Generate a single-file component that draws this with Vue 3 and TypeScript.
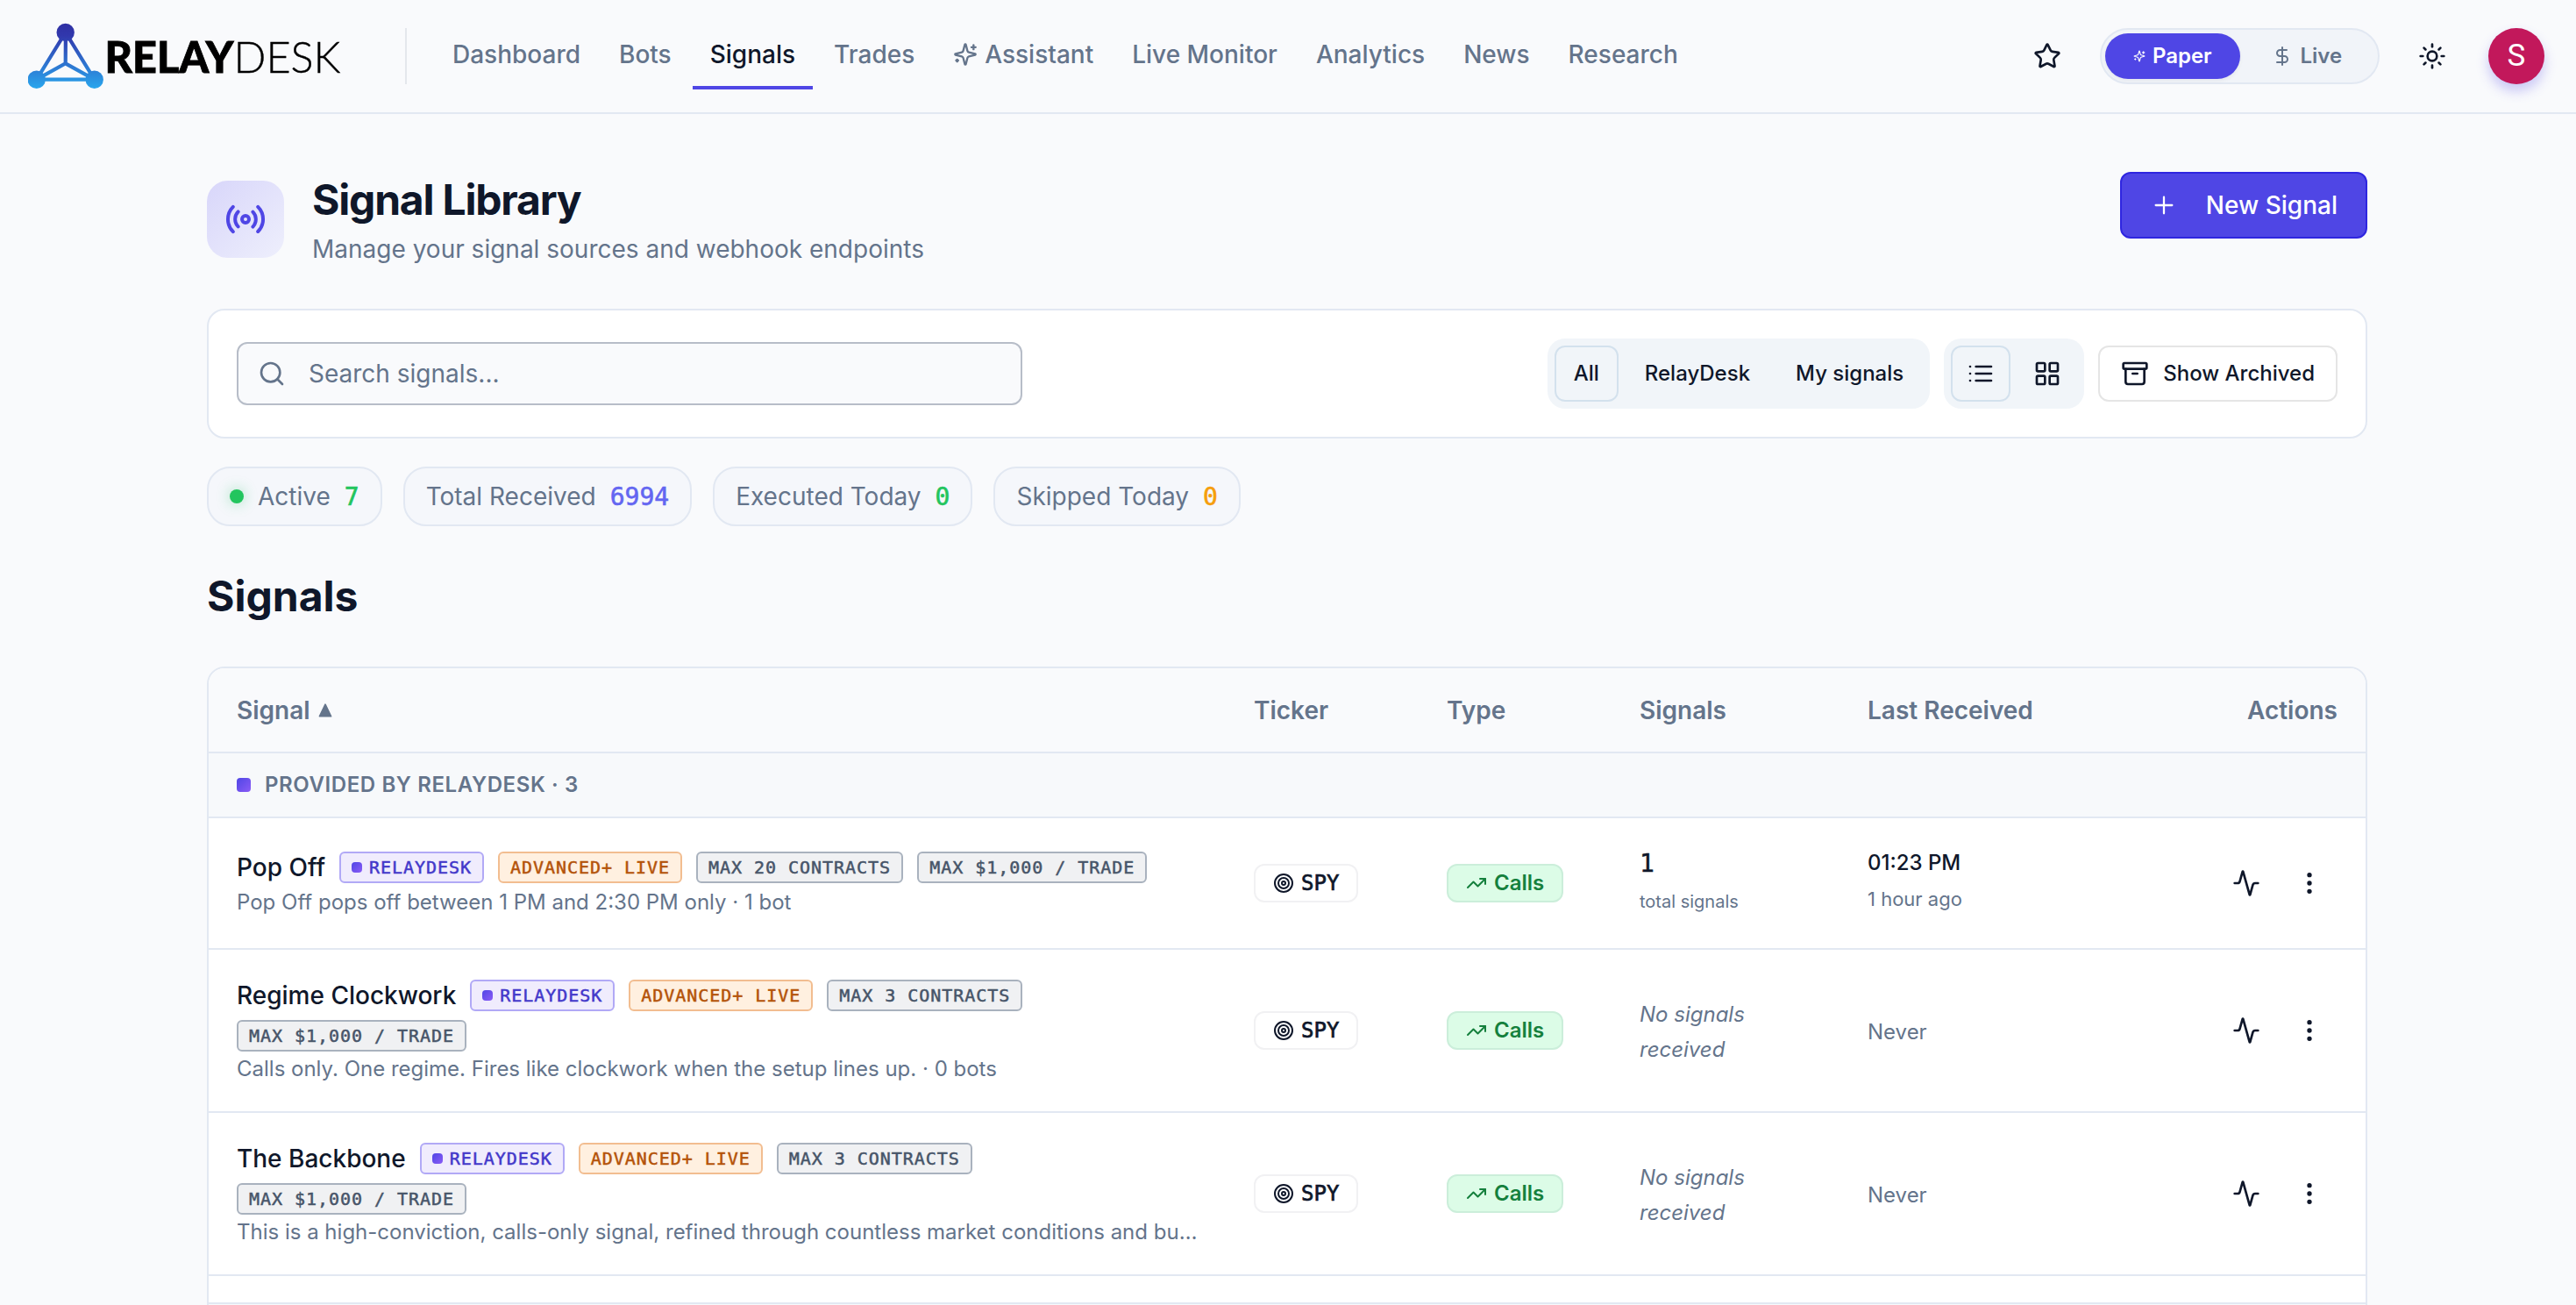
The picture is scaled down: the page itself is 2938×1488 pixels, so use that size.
<script setup lang="ts">
import { h, type FunctionalComponent } from 'vue'

const circle = (cx: number, cy: number, r: number) =>
  `M${cx - r} ${cy}a${r} ${r} 0 1 0 ${2 * r} 0a${r} ${r} 0 1 0 ${-2 * r} 0`

const icons: Record<string, string[]> = {
  sparkles: [
    'M9.937 15.5A2 2 0 0 0 8.5 14.063l-6.135-1.582a.5.5 0 0 1 0-.962L8.5 9.936A2 2 0 0 0 9.937 8.5l1.582-6.135a.5.5 0 0 1 .963 0L14.063 8.5A2 2 0 0 0 15.5 9.937l6.135 1.581a.5.5 0 0 1 0 .964L15.5 14.063a2 2 0 0 0-1.437 1.437l-1.582 6.135a.5.5 0 0 1-.963 0z',
    'M20 3v4', 'M22 5h-4', 'M4 17v2', 'M5 18H3',
  ],
  star: ['M11.525 2.295a.53.53 0 0 1 .95 0l2.31 4.679a2.123 2.123 0 0 0 1.595 1.16l5.166.756a.53.53 0 0 1 .294.904l-3.736 3.638a2.123 2.123 0 0 0-.611 1.878l.882 5.14a.53.53 0 0 1-.771.56l-4.618-2.428a2.122 2.122 0 0 0-1.973 0L6.396 21.01a.53.53 0 0 1-.77-.56l.881-5.139a2.122 2.122 0 0 0-.611-1.879L2.16 9.795a.53.53 0 0 1 .294-.906l5.165-.755a2.122 2.122 0 0 0 1.597-1.16z'],
  dollar: ['M12 2v20', 'M17 5H9.5a3.5 3.5 0 0 0 0 7h5a3.5 3.5 0 0 1 0 7H6'],
  sun: [circle(12, 12, 4), 'M12 2v2', 'M12 20v2', 'm4.93 4.93 1.41 1.41', 'm17.66 17.66 1.41 1.41', 'M2 12h2', 'M20 12h2', 'm6.34 17.66-1.41 1.41', 'm19.07 4.93-1.41 1.41'],
  radio: ['M4.9 19.1C1 15.2 1 8.8 4.9 4.9', 'M7.8 16.2c-2.3-2.3-2.3-6.1 0-8.5', circle(12, 12, 2), 'M16.2 7.8c2.3 2.3 2.3 6.1 0 8.5', 'M19.1 4.9C23 8.8 23 15.1 19.1 19'],
  plus: ['M5 12h14', 'M12 5v14'],
  search: [circle(11, 11, 8), 'm21 21-4.3-4.3'],
  list: ['M3 6h.01', 'M3 12h.01', 'M3 18h.01', 'M8 6h13', 'M8 12h13', 'M8 18h13'],
  grid: [
    'M4 3h5a1 1 0 0 1 1 1v5a1 1 0 0 1-1 1H4a1 1 0 0 1-1-1V4a1 1 0 0 1 1-1z',
    'M15 3h5a1 1 0 0 1 1 1v5a1 1 0 0 1-1 1h-5a1 1 0 0 1-1-1V4a1 1 0 0 1 1-1z',
    'M15 14h5a1 1 0 0 1 1 1v5a1 1 0 0 1-1 1h-5a1 1 0 0 1-1-1v-5a1 1 0 0 1 1-1z',
    'M4 14h5a1 1 0 0 1 1 1v5a1 1 0 0 1-1 1H4a1 1 0 0 1-1-1v-5a1 1 0 0 1 1-1z',
  ],
  archive: ['M3 3h18a1 1 0 0 1 1 1v3a1 1 0 0 1-1 1H3a1 1 0 0 1-1-1V4a1 1 0 0 1 1-1z', 'M4 8v11a2 2 0 0 0 2 2h12a2 2 0 0 0 2-2V8', 'M10 12h4'],
  target: [circle(12, 12, 10), circle(12, 12, 6), circle(12, 12, 2)],
  trend: ['M22 7 13.5 15.5 8.5 10.5 2 17', 'M16 7h6v6'],
  activity: ['M22 12h-2.48a2 2 0 0 0-1.93 1.46l-2.35 8.36a.25.25 0 0 1-.48 0L9.24 2.18a.25.25 0 0 0-.48 0l-2.35 8.36A2 2 0 0 1 4.49 12H2'],
  more: [circle(12, 5, 1), circle(12, 12, 1), circle(12, 19, 1)],
}

const Icon: FunctionalComponent<{ name: string; size: number; weight?: number }> = (props) =>
  h(
    'svg',
    {
      width: props.size,
      height: props.size,
      viewBox: '0 0 24 24',
      fill: 'none',
      stroke: 'currentColor',
      'stroke-width': props.weight ?? 2,
      'stroke-linecap': 'round',
      'stroke-linejoin': 'round',
      style: 'display:block;flex:none',
    },
    (icons[props.name] ?? []).map((d) => h('path', { d })),
  )
Icon.props = ['name', 'size', 'weight']

interface NavItem { label: string; icon?: string; active?: boolean }
const nav: NavItem[] = [
  { label: 'Dashboard' },
  { label: 'Bots' },
  { label: 'Signals', active: true },
  { label: 'Trades' },
  { label: 'Assistant', icon: 'sparkles' },
  { label: 'Live Monitor' },
  { label: 'Analytics' },
  { label: 'News' },
  { label: 'Research' },
]

const stats = [
  { label: 'Active', value: '7', tone: 'green', dot: true },
  { label: 'Total Received', value: '6994', tone: 'indigo', dot: false },
  { label: 'Executed Today', value: '0', tone: 'green', dot: false },
  { label: 'Skipped Today', value: '0', tone: 'amber', dot: false },
]

interface SignalRow {
  name: string
  caps: string[]
  twoLines: boolean
  desc: string
  total?: string
  time?: string
  ago?: string
}
const rows: SignalRow[] = [
  {
    name: 'Pop Off',
    caps: ['MAX 20 CONTRACTS', 'MAX $1,000 / TRADE'],
    twoLines: false,
    desc: 'Pop Off pops off between 1 PM and 2:30 PM only · 1 bot',
    total: '1',
    time: '01:23 PM',
    ago: '1 hour ago',
  },
  {
    name: 'Regime Clockwork',
    caps: ['MAX 3 CONTRACTS', 'MAX $1,000 / TRADE'],
    twoLines: true,
    desc: 'Calls only. One regime. Fires like clockwork when the setup lines up. · 0 bots',
  },
  {
    name: 'The Backbone',
    caps: ['MAX 3 CONTRACTS', 'MAX $1,000 / TRADE'],
    twoLines: true,
    desc: 'This is a high-conviction, calls-only signal, refined through countless market conditions and bu…',
  },
]
</script>

<template>
  <div class="page">
    <header class="topbar">
      <svg class="logo" width="372" height="96" viewBox="0 0 372 96">
        <defs>
          <linearGradient id="brand" gradientUnits="userSpaceOnUse" x1="0" y1="10" x2="0" y2="84">
            <stop offset="0" stop-color="#2f2fa2" />
            <stop offset="0.2" stop-color="#3138ad" />
            <stop offset="1" stop-color="#2aa5ec" />
          </linearGradient>
        </defs>
        <g stroke="url(#brand)" stroke-width="4.2" fill="none">
          <path d="M42.7 21 9.7 74.7H75.7Z" />
          <path d="M42.9 21 42.7 56.3 9.7 74.7M42.7 56.3 75.7 74.7" />
        </g>
        <g fill="url(#brand)">
          <circle cx="42.7" cy="21" r="10.2" />
          <circle cx="9.7" cy="74.7" r="10.2" />
          <circle cx="75.7" cy="74.7" r="10.2" />
        </g>
        <text class="logo-bold" x="87.5" y="66.8" textLength="147" lengthAdjust="spacingAndGlyphs">RELAY</text>
        <text class="logo-thin" x="234.5" y="67" textLength="122" lengthAdjust="spacingAndGlyphs">DESK</text>
      </svg>
      <div class="divider"></div>
      <nav class="nav">
        <a v-for="n in nav" :key="n.label" class="nav-item" :class="{ active: n.active }">
          <Icon v-if="n.icon" :name="n.icon" :size="28" />
          <span>{{ n.label }}</span>
        </a>
      </nav>
      <div class="tools">
        <Icon class="ink" name="star" :size="32" />
        <div class="mode">
          <div class="mode-btn on"><Icon name="sparkles" :size="14" /><span>Paper</span></div>
          <div class="mode-btn"><Icon name="dollar" :size="24" /><span>Live</span></div>
        </div>
        <Icon class="ink sun" name="sun" :size="32" />
        <div class="avatar">S</div>
      </div>
    </header>

    <main class="content">
      <section class="hero">
        <div class="hero-icon"><Icon name="radio" :size="48" /></div>
        <div class="hero-text">
          <h1>Signal Library</h1>
          <p>Manage your signal sources and webhook endpoints</p>
        </div>
        <button class="primary"><Icon name="plus" :size="32" :weight="1.7" /><span>New Signal</span></button>
      </section>

      <section class="filters">
        <div class="search"><Icon name="search" :size="32" /><span>Search signals...</span></div>
        <div class="filter-right">
          <div class="segment">
            <div class="seg on">All</div>
            <div class="seg">RelayDesk</div>
            <div class="seg">My signals</div>
          </div>
          <div class="segment">
            <div class="seg view on"><Icon name="list" :size="32" /></div>
            <div class="seg view"><Icon name="grid" :size="32" /></div>
          </div>
          <div class="archived"><Icon name="archive" :size="32" /><span>Show Archived</span></div>
        </div>
      </section>

      <section class="stats">
        <div v-for="s in stats" :key="s.label" class="stat">
          <i v-if="s.dot" class="live-dot"></i>
          <span>{{ s.label }}</span>
          <b :class="s.tone">{{ s.value }}</b>
        </div>
      </section>

      <h2>Signals</h2>

      <section class="table">
        <div class="tr head">
          <div class="sort">
            <span>Signal</span>
            <svg width="16" height="16" viewBox="0 0 16 16"><path d="M8 1.2 14.6 14.8H1.4Z" fill="#64748b" stroke="#64748b" stroke-width="1.6" stroke-linejoin="round" /></svg>
          </div>
          <div>Ticker</div>
          <div>Type</div>
          <div>Signals</div>
          <div>Last Received</div>
          <div class="end">Actions</div>
        </div>
        <div class="group"><i class="chip"></i><span>PROVIDED BY RELAYDESK · 3</span></div>
        <div v-for="r in rows" :key="r.name" class="tr body" :class="{ tall: r.twoLines }">
          <div>
            <div class="names">
              <span class="name">{{ r.name }}</span>
              <span class="tag relay"><i></i>RELAYDESK</span>
              <span class="tag plan">ADVANCED+ LIVE</span>
              <span v-for="c in r.caps" :key="c" class="tag cap">{{ c }}</span>
            </div>
            <div class="desc">{{ r.desc }}</div>
          </div>
          <div><span class="ticker"><Icon name="target" :size="24" />SPY</span></div>
          <div><span class="calls"><Icon name="trend" :size="24" />Calls</span></div>
          <div v-if="r.total" class="total"><b>{{ r.total }}</b><small>total signals</small></div>
          <div v-else class="none">No signals received</div>
          <div v-if="r.time" class="last"><b>{{ r.time }}</b><small>{{ r.ago }}</small></div>
          <div v-else class="never">Never</div>
          <div class="actions">
            <span><Icon name="activity" :size="32" /></span>
            <span><Icon name="more" :size="32" /></span>
          </div>
        </div>
        <div class="spacer"></div>
        <div class="rest"></div>
      </section>
    </main>
  </div>
</template>

<style>
body { background: #f9fafc; overflow: hidden; }
</style>

<style scoped>
.page {
  width: 2938px;
  height: 1488px;
  overflow: hidden;
  background: #f9fafc;
  color: #0f172a;
  font-family: Inter, "Liberation Sans", sans-serif;
  font-size: 28px;
  line-height: 42px;
}
.page *, .page *::before { box-sizing: border-box; }
.topbar {
  height: 130px;
  display: flex;
  align-items: center;
  border-bottom: 2px solid #e2e8f2;
  padding: 0 36px 0 32px;
}
.logo { display: block; flex: none; }
.logo-bold { font: 900 50px Lato, sans-serif; fill: #000; stroke: #000; stroke-width: .8px; }
.logo-thin { font: 300 50px Lato, sans-serif; fill: #000; stroke: #000; stroke-width: .4px; }
.divider { width: 2px; height: 64px; background: #e4e7ec; margin: 0 32px 0 58px; }
.nav { display: flex; gap: 4px; height: 76px; align-self: flex-start; margin-top: 26px; }
.nav-item {
  display: flex;
  align-items: center;
  gap: 8px;
  padding: 0 20px;
  border-bottom: 4px solid transparent;
  color: #64748b;
  font-weight: 500;
  height: 76px;
}
.nav-item.active { color: #0f172a; border-bottom-color: #4f46e5; }
.tools { margin-left: auto; display: flex; align-items: center; }
.ink { color: #0f172a; }
.mode {
  width: 319px;
  height: 64px;
  margin-left: 44px;
  padding: 4px;
  border: 2px solid #e2e8f2;
  border-radius: 32px;
  background: #f1f4f9;
  display: flex;
}
.mode-btn {
  flex: 1;
  border-radius: 26px;
  display: flex;
  align-items: center;
  justify-content: center;
  gap: 8px;
  font-size: 24px;
  font-weight: 600;
  color: #64748b;
}
.mode-btn.on { background: #4f46e5; color: #fff; box-shadow: 0 2px 4px rgba(15, 23, 42, .06); }
.sun { margin-left: 44px; }
.avatar {
  width: 64px;
  height: 64px;
  margin-left: 48px;
  border-radius: 50%;
  background: #c2185b;
  color: #fff;
  display: grid;
  place-items: center;
  font: 400 35px/64px Roboto, sans-serif;
  box-shadow: 0 8px 14px rgba(79, 70, 229, .28);
}
.content { width: 2464px; margin: 0 auto; position: relative; left: -1px; }
.hero { display: flex; padding-top: 66px; height: 222px; }
.hero-icon {
  width: 88px;
  height: 88px;
  margin-top: 10px;
  border-radius: 24px;
  background: linear-gradient(135deg, #d8d6fa, #eeeffc);
  color: #4f46e5;
  display: grid;
  place-items: center;
}
.hero-text { margin-left: 32px; }
h1 { margin: 0; font-size: 48px; line-height: 60px; font-weight: 700; letter-spacing: -1.2px; padding-top: 2px; }
.hero-text p { margin: 5px 0 0; color: #64748b; }
.primary {
  margin-left: auto;
  width: 282px;
  height: 76px;
  padding: 0 32px;
  border: 2px solid #2f26e0;
  border-radius: 12px;
  background: #4f46e5;
  color: #fff;
  font: 500 28px/42px Inter, sans-serif;
  display: flex;
  align-items: center;
  justify-content: space-between;
}
.filters {
  height: 148px;
  padding: 0 32px;
  border: 2px solid #e2e8f2;
  border-radius: 20px;
  background: #fff;
  display: flex;
  align-items: center;
  justify-content: space-between;
}
.search {
  width: 896px;
  height: 72px;
  padding-left: 22px;
  border: 2px solid #b7bdc8;
  border-radius: 12px;
  background: #f9fafc;
  color: #64748b;
  display: flex;
  align-items: center;
  gap: 26px;
}
.filter-right { display: flex; align-items: center; gap: 16px; font-size: 24px; font-weight: 500; }
.segment { display: flex; gap: 8px; height: 80px; padding: 8px; border-radius: 20px; background: #f1f5f9; }
.seg {
  height: 64px;
  padding: 0 20px;
  border: 2px solid transparent;
  border-radius: 12px;
  display: flex;
  align-items: center;
}
.seg.on { border-color: #d3e1ed; }
.seg.view { width: 68px; padding: 0; justify-content: center; }
.archived {
  height: 64px;
  padding: 0 24px;
  border: 2px solid #e5e5e5;
  border-radius: 12px;
  display: flex;
  align-items: center;
  gap: 16px;
}
.stats { display: flex; gap: 24px; margin-top: 32px; }
.stat {
  height: 68px;
  padding: 0 24px;
  border: 2px solid #e2e8f2;
  border-radius: 26px;
  background: #f5f7fb;
  color: #64748b;
  display: flex;
  align-items: center;
  gap: 16px;
}
.stat b { font: 400 28px/42px "DejaVu Sans Mono", monospace; -webkit-text-stroke: .6px currentColor; padding-top: 1px; }
.live-dot { width: 16px; height: 16px; border-radius: 50%; background: #22c55e; box-shadow: 0 0 16px rgba(34, 197, 94, .4); }
.green { color: #22c55e; }
.indigo { color: #6366f1; }
.amber { color: #f59e0b; }
h2 { margin: 48px 0 0; font-size: 48px; line-height: 64px; font-weight: 700; }
.table {
  margin-top: 48px;
  border: 2px solid #e2e8f2;
  border-radius: 20px;
  background: #fff;
  overflow: hidden;
}
.tr {
  display: grid;
  grid-template-columns: 1160px 220px 220px 260px 300px 300px;
  align-items: center;
  border-bottom: 2px solid #e2e8f2;
}
.tr > div { padding: 0 32px; min-width: 0; }
.tr.head { height: 97px; background: #f9fafc; color: #64748b; font-weight: 600; }
.sort { display: flex; align-items: center; gap: 9px; }
.end { text-align: right; }
.group {
  height: 74px;
  padding: 0 32px;
  background: #f7f9fb;
  border-bottom: 2px solid #e2e8f2;
  color: #64748b;
  font-size: 24px;
  font-weight: 600;
  letter-spacing: .6px;
  display: flex;
  align-items: center;
  gap: 16px;
}
.chip { width: 16px; height: 16px; border-radius: 4px; background: linear-gradient(135deg, #4f46e5, #8b5cf6); }
.body { height: 150px; }
.body.tall { height: 186px; }
.names { display: flex; flex-wrap: wrap; align-items: center; gap: 7px 16px; }
.tall .names { padding-bottom: 1px; }
.name { font-weight: 500; }
.tag {
  height: 36px;
  padding: 0 12px;
  border: 2px solid;
  border-radius: 6px;
  display: inline-flex;
  align-items: center;
  font: 400 20px/32px "DejaVu Sans Mono", monospace;
  letter-spacing: .96px;
  white-space: pre;
  -webkit-text-stroke: .5px currentColor;
}
.tag i { width: 12px; height: 12px; margin-right: 8px; border-radius: 4px; background: linear-gradient(135deg, #4f46e5, #8b5cf6); }
.relay { color: #4338ca; background: #f0ecfd; border-color: #b1a9f6; }
.plan { color: #b45309; background: #fff0e0; border-color: #f2bd90; }
.cap { color: #475569; background: #f0f1f3; border-color: #a9b2be; }
.desc { font-size: 24px; line-height: 36px; padding-top: 1px; margin-bottom: -1px; color: #64748b; white-space: nowrap; overflow: hidden; text-overflow: ellipsis; }
.ticker, .calls {
  height: 44px;
  padding: 0 20px;
  border: 2px solid #f1f1f3;
  border-radius: 12px;
  display: inline-flex;
  align-items: center;
  gap: 8px;
  vertical-align: top;
}
.ticker { font: 400 24px/40px "DejaVu Sans Mono", monospace; -webkit-text-stroke: .7px currentColor; }
.calls { font-size: 24px; font-weight: 600; color: #15803d; background: #dcfce7; border-color: #cbeeda; }
.total b, .last b { display: block; }
.total small, .last small { display: block; color: #64748b; }
.total b { font: 400 28px/42px "DejaVu Sans Mono", monospace; -webkit-text-stroke: .5px currentColor; }
.total small { font-size: 20px; line-height: 45px; }
.tr > .last { padding-bottom: 4px; }
.last b { font-size: 24px; line-height: 40px; font-weight: 500; }
.last small { font-size: 22px; line-height: 42px; }
.tr > .none { font-size: 24px; line-height: 40px; font-style: italic; color: #64748b; padding-top: 3px; }
.tr > .never { font-size: 24px; color: #64748b; padding-top: 3px; }
.actions { display: flex; justify-content: flex-end; gap: 8px; }
.actions span { width: 64px; height: 64px; display: grid; place-items: center; }
.spacer { height: 32px; border-bottom: 2px solid #e2e8f2; }
.rest { height: 60px; background: #f7f9fb; }
</style>
